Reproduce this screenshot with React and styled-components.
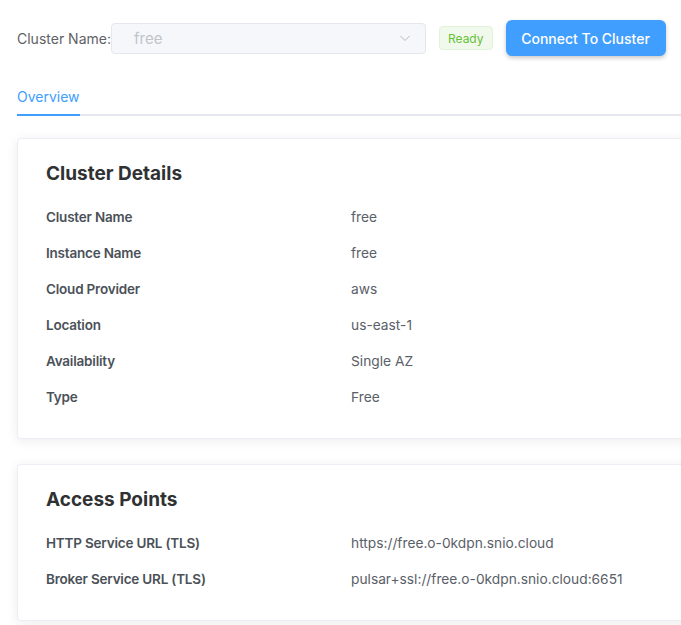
import styled, { createGlobalStyle } from 'styled-components';

const GlobalStyle = createGlobalStyle`
  html, body {
    margin: 0;
    padding: 0;
    background: #ffffff;
    overflow: hidden;
    font-family: Inter, "Noto Sans", "Liberation Sans", sans-serif;
  }
`

const clusterDetails = [
  ['Cluster Name', 'free'],
  ['Instance Name', 'free'],
  ['Cloud Provider', 'aws'],
  ['Location', 'us-east-1'],
  ['Availability', 'Single AZ'],
  ['Type', 'Free'],
];

const accessPoints = [
  ['HTTP Service URL (TLS)', 'https://free.o-0kdpn.snio.cloud'],
  ['Broker Service URL (TLS)', 'pulsar+ssl://free.o-0kdpn.snio.cloud:6651'],
];

const Chevron = () => (
  <svg width="12" height="12" viewBox="0 0 12 12" fill="none">
    <path d="M1.5 4l4.5 4.5L10.5 4" stroke="#b4b9c2" strokeWidth="1" />
  </svg>
);

// one card = title + label/value rows
const InfoCard = ({ title, rows }) => (
  <Card>
    <CardTitle>{title}</CardTitle>
    <InfoList>
      {rows.map(([label, value]) => (
        <InfoRow key={label}>
          <InfoLabel>{label}</InfoLabel>
          <InfoValue>{value}</InfoValue>
        </InfoRow>
      ))}
    </InfoList>
  </Card>
);

const App = () => {
  return (
    <Page>
      <GlobalStyle />
      <Toolbar>
        <FieldLabel>Cluster Name:</FieldLabel>
        <SelectBox>
          <SelectText>free</SelectText>
          <Chevron />
        </SelectBox>
        <Tag>Ready</Tag>
        <PrimaryBtn>Connect To Cluster</PrimaryBtn>
      </Toolbar>

      <TabNav>
        <TabItem $active>Overview</TabItem>
      </TabNav>

      <InfoCard title="Cluster Details" rows={clusterDetails} />
      <InfoCard title="Access Points" rows={accessPoints} />
    </Page>
  )
}

export default App;

const Page = styled.div`
  width: 720px;
  padding: 20px 0 0 17px;
  box-sizing: border-box;
`

const Toolbar = styled.div`
  display: flex;
  align-items: center;
  height: 36px;
`

const FieldLabel = styled.span`
  font-size: 14px;
  color: #606266;
`

const SelectBox = styled.div`
  width: 315px;
  height: 31px;
  box-sizing: border-box;
  display: flex;
  align-items: center;
  justify-content: space-between;
  padding: 0 14px 0 22px;
  background: #f5f7fa;
  border: 1px solid #e4e7ed;
  border-radius: 4px;
`

const SelectText = styled.span`
  font-size: 15px;
  color: #c0c4cc;
`

const Tag = styled.span`
  margin-left: 13px;
  height: 24px;
  box-sizing: border-box;
  padding: 0 8px;
  display: inline-flex;
  align-items: center;
  font-size: 12px;
  color: #67c23a;
  background: #f0f9eb;
  border: 1px solid #e1f3d8;
  border-radius: 4px;
`

const PrimaryBtn = styled.button`
  margin-left: 13px;
  height: 36px;
  width: 160px;
  border: none;
  border-radius: 6px;
  background: #409eff;
  color: #ffffff;
  font-family: inherit;
  font-size: 14px;
  font-weight: 500;
  box-shadow: 0 2px 4px rgba(0, 0, 0, 0.22);
  cursor: pointer;
`

const TabNav = styled.div`
  display: flex;
  margin-top: 18px;
  border-bottom: 2px solid #e4e7ed;
  margin-bottom: 22px;
`

const TabItem = styled.div`
  height: 42px;
  box-sizing: border-box;
  padding-top: 6px;
  line-height: 34px;
  font-size: 14px;
  color: ${({ $active }) => ($active ? '#409eff' : '#303133')};
  margin-bottom: -2px;
  border-bottom: 2px solid ${({ $active }) => ($active ? '#409eff' : 'transparent')};
`

const Card = styled.div`
  border: 1px solid #ebeef5;
  border-radius: 4px;
  background: #ffffff;
  box-shadow: 0 2px 12px 0 rgba(0, 0, 0, 0.08);
  padding: 21px 28px 23px;
  margin-bottom: 25px;
`

const CardTitle = styled.h3`
  margin: 0;
  font-size: 19px;
  line-height: 28px;
  font-weight: 700;
  color: #303133;
`

const InfoList = styled.div`
  margin-top: 11px;
  display: flex;
  flex-direction: column;
`

const InfoRow = styled.div`
  display: grid;
  grid-template-columns: 305px 1fr;
  height: 36px;
  align-items: center;
`

const InfoLabel = styled.span`
  font-size: 13.5px;
  font-weight: 600;
  letter-spacing: -0.2px;
  color: #4b5158;
`

const InfoValue = styled.span`
  font-size: 13.75px;
  color: #5a6068;
`
